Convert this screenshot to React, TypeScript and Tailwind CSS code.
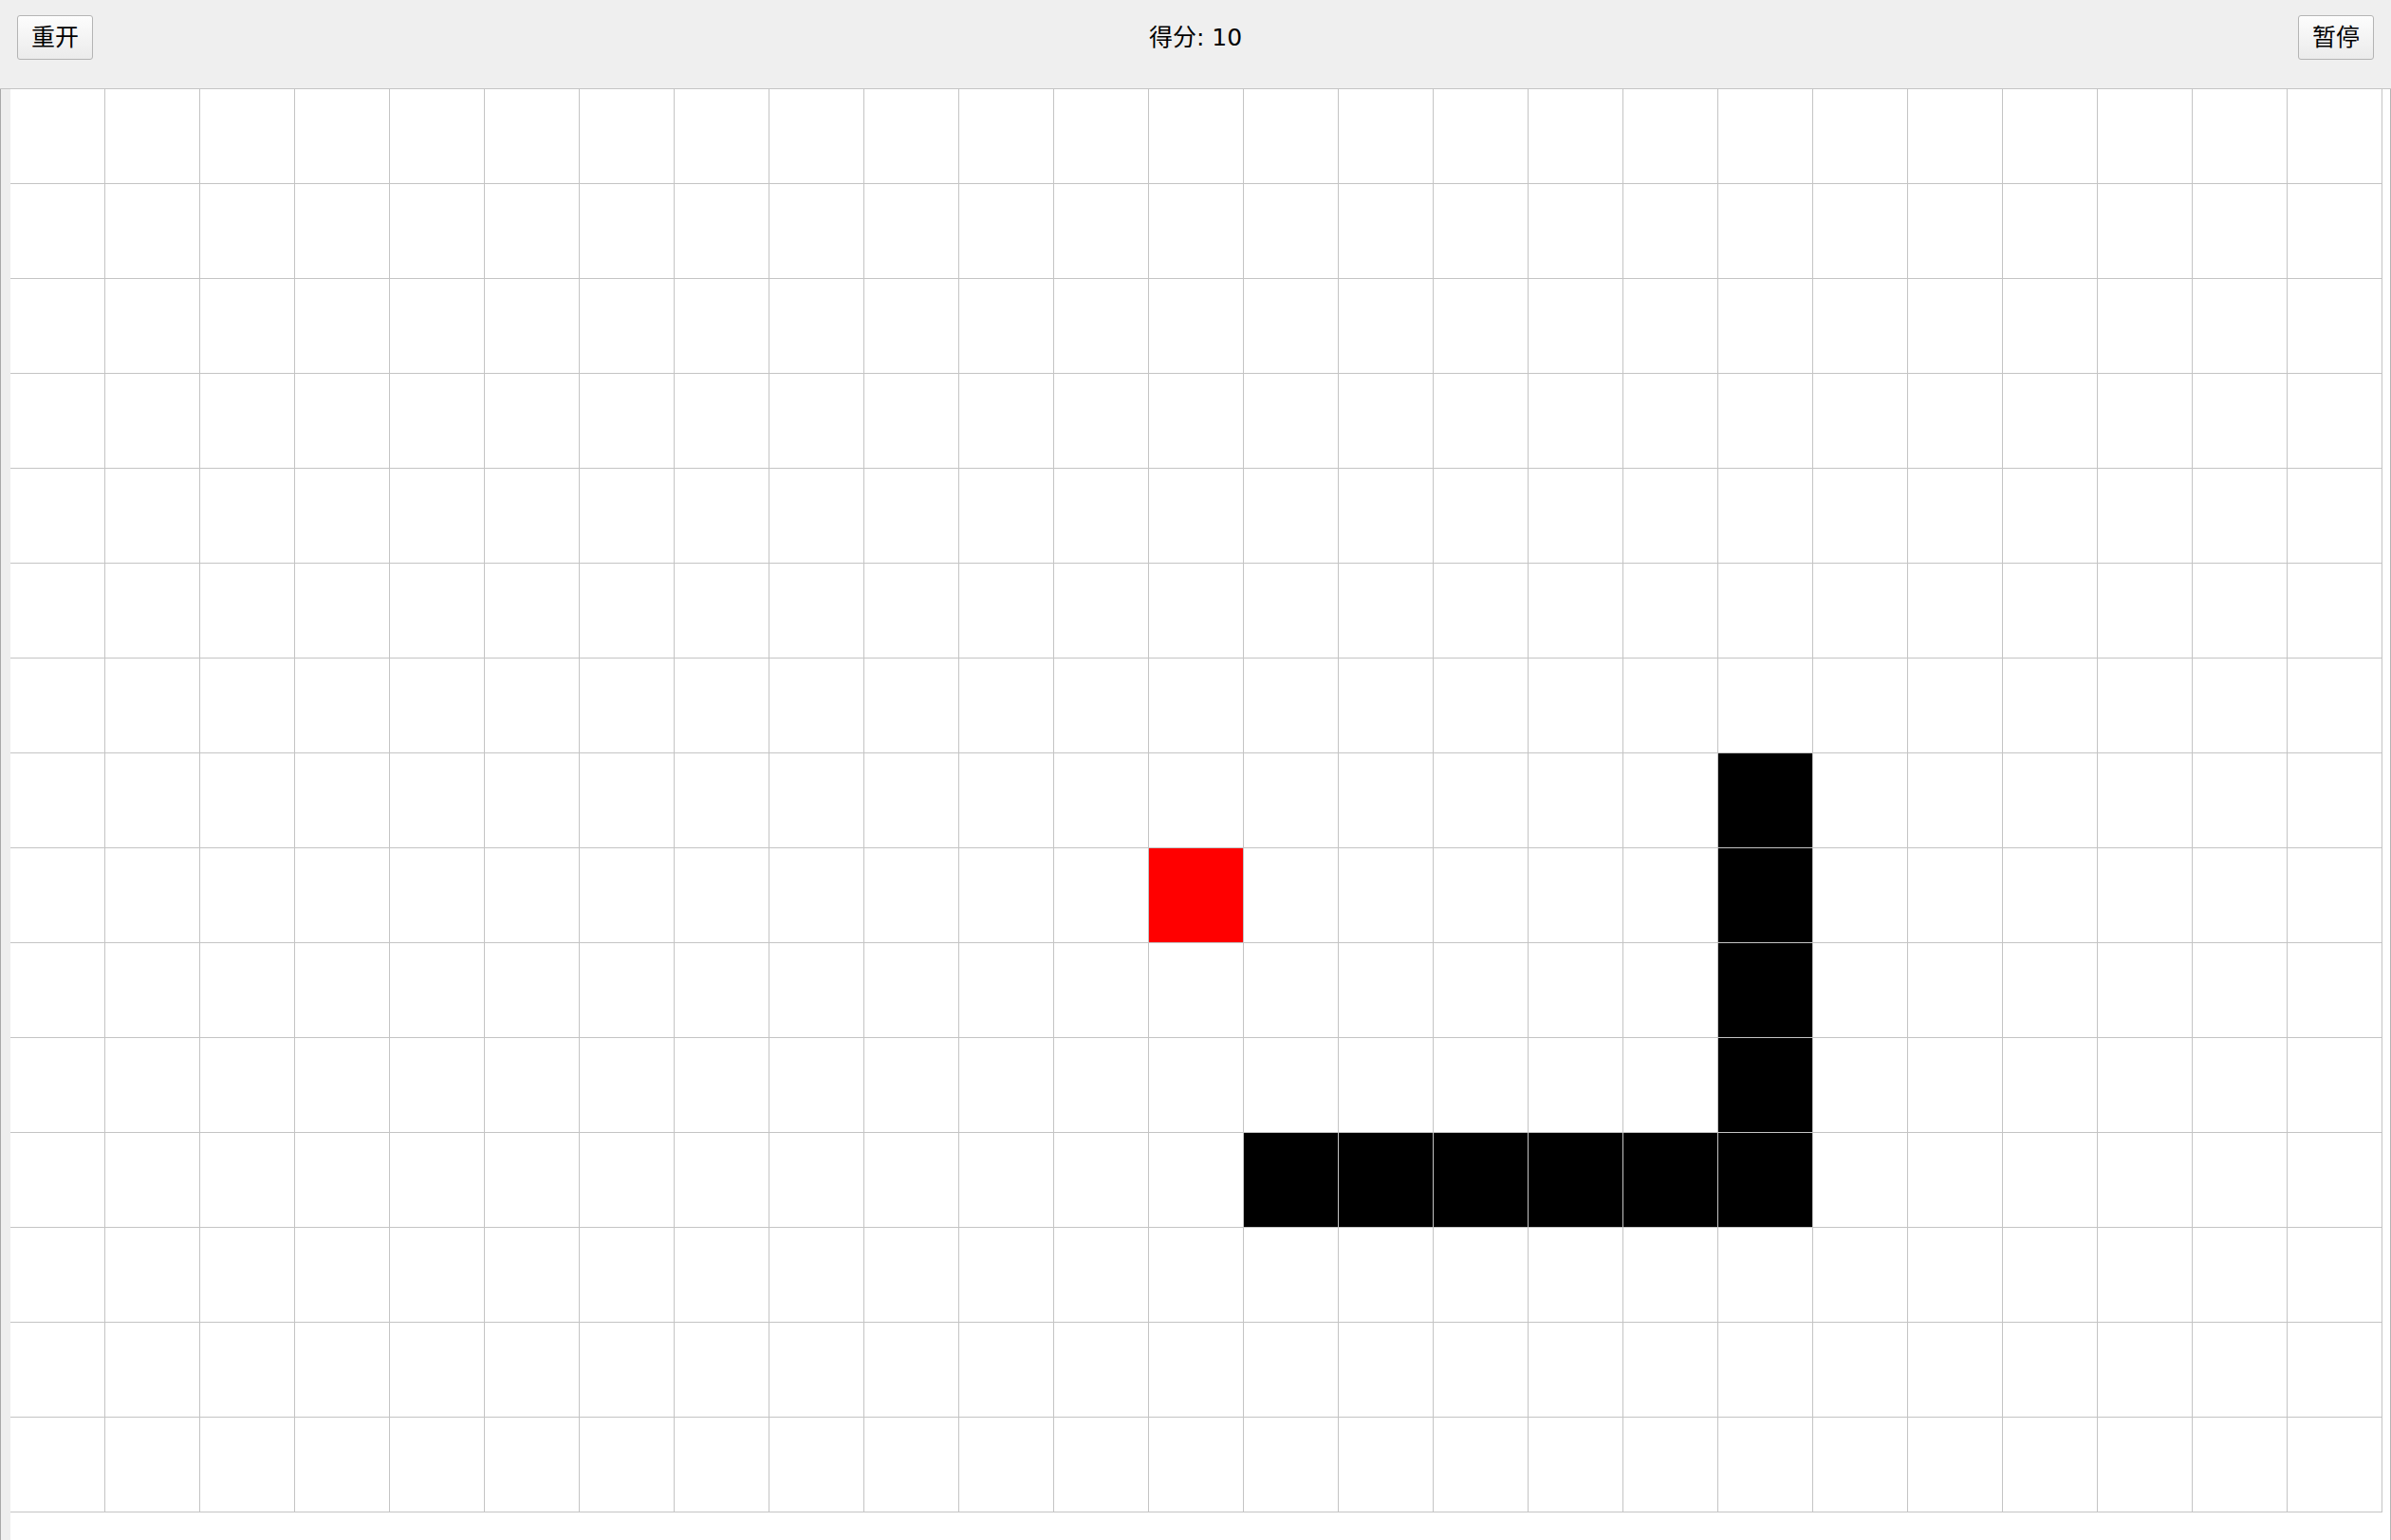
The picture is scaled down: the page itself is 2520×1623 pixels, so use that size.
import React from "react";

const COLS = 25;
const ROWS = 15;

const snake: [number, number][] = [
  [18, 7],
  [18, 8],
  [18, 9],
  [18, 10],
  [18, 11],
  [17, 11],
  [16, 11],
  [15, 11],
  [14, 11],
  [13, 11],
];
const food: [number, number] = [12, 8];

const font = { fontFamily: '"DejaVu Sans", "Noto Sans CJK SC", sans-serif' };

function Button({ children }: { children: React.ReactNode }) {
  return (
    <button className="w-[80px] h-[47px] rounded-[3px] border border-[#b4b4b4] bg-gradient-to-b from-[#fdfdfd] to-[#ebebeb] text-[25px] leading-none text-black flex items-center justify-center">
      {children}
    </button>
  );
}

export default function App() {
  const isSnake = (x: number, y: number) => snake.some(([sx, sy]) => sx === x && sy === y);

  return (
    <div className="w-[2520px] h-[1623px] flex flex-col overflow-hidden bg-white" style={font}>
      <div className="h-[94px] shrink-0 bg-[#efefef] border-b border-[#c4c4c4] flex items-start justify-between px-[18px] pt-[16px]">
        <Button>重开</Button>
        <div className="text-[25px] leading-none text-black pt-[11px]">得分: 10</div>
        <Button>暂停</Button>
      </div>
      <div className="flex-1 flex">
        <div className="w-[11px] shrink-0 bg-[#eeeeee] border-l border-[#a8a8a8]" />
        <div className="grid grid-cols-[repeat(25,100px)] grid-rows-[repeat(15,100px)] self-start">
          {Array.from({ length: ROWS * COLS }).map((_, i) => {
            const x = i % COLS;
            const y = Math.floor(i / COLS);
            const bg = x === food[0] && y === food[1] ? "bg-[#ff0000]" : isSnake(x, y) ? "bg-black" : "bg-white";
            return <div key={i} className={`border-r border-b border-[#c4c4c4] ${bg}`} />;
          })}
        </div>
        <div className="flex-1 border-r border-[#b4b4b4]" />
      </div>
    </div>
  );
}
